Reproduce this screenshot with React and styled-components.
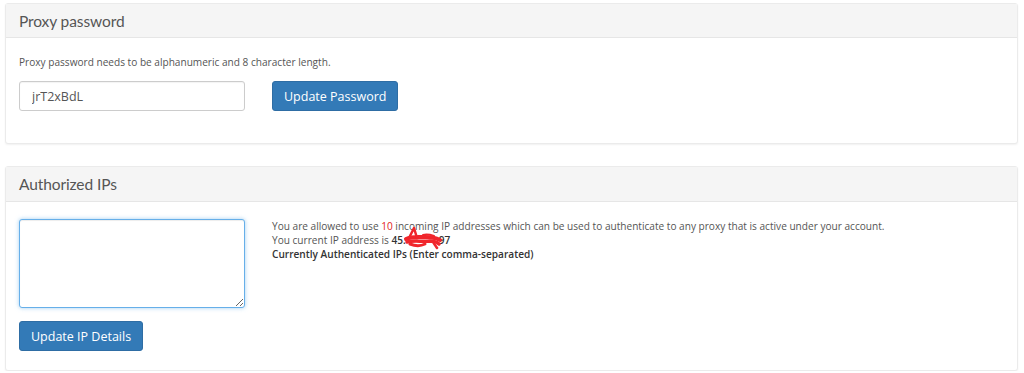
import React from 'react';
import styled, { createGlobalStyle } from 'styled-components';

const Global = createGlobalStyle`
  body {
    margin: 0;
    background: #fff;
    font-family: "Open Sans", "Liberation Sans", sans-serif;
    color: #555;
  }
`;

const Page = styled.div`
  padding: 3px 6px 0 5px;
  display: flex;
  flex-direction: column;
  gap: 22px;
`;

const Panel = styled.section`
  background: #fff;
  border: 1px solid #ebebeb;
  border-radius: 3px;
  box-shadow: 0 1px 2px rgba(0, 0, 0, 0.06);
`;

const PanelHeading = styled.div`
  background: #f5f5f5;
  border-bottom: 1px solid #e6e6e6;
  height: ${(p) => p.h}px;
  box-sizing: border-box;
  padding-left: 13px;
  display: flex;
  align-items: center;
  font-family: "Lato", "Open Sans", sans-serif;
  font-size: 15.5px;
  letter-spacing: -0.1px;
  color: #555;
`;

const PanelBody = styled.div`
  padding: ${(p) => p.pad};
`;

const Hint = styled.p`
  margin: 0 0 12px;
  font-size: 10.1px;
  line-height: 14px;
  color: #555;
`;

const Row = styled.div`
  display: flex;
  align-items: flex-start;
  gap: 27px;
`;

const TextInput = styled.input`
  width: 226px;
  height: 30px;
  box-sizing: border-box;
  border: 1px solid #ccc;
  border-radius: 3px;
  padding: 0 12px;
  font-family: "Open Sans", sans-serif;
  font-size: 12.5px;
  color: #555;
  box-shadow: inset 0 1px 1px rgba(0, 0, 0, 0.05);
  outline: none;
`;

const Button = styled.button`
  height: 30px;
  padding: 0 11px;
  background: #337ab7;
  border: 1px solid #2e6da4;
  border-radius: 3px;
  color: #fff;
  font-family: "Open Sans", sans-serif;
  font-size: 12.5px;
  cursor: pointer;
`;

const Column = styled.div`
  display: flex;
  flex-direction: column;
  align-items: flex-start;
  gap: 13px;
`;

const TextArea = styled.textarea`
  width: 226px;
  height: 89px;
  box-sizing: border-box;
  border: 1px solid #66afe9;
  border-radius: 3px;
  box-shadow: inset 0 1px 1px rgba(0, 0, 0, 0.075), 0 0 4px rgba(102, 175, 233, 0.6);
  outline: none;
  resize: vertical;
  font-family: "Open Sans", sans-serif;
`;

const Info = styled.div`
  font-size: 10.1px;
  line-height: 14px;
  color: #555;
`;

const Count = styled.span`
  color: #e2231a;
`;

const Strong = styled.b`
  color: #333;
  font-weight: 600;
`;

const Hidden = styled.span`
  position: relative;
  display: inline-block;
  width: 33px;
  height: 10px;
`;

const Scribble = styled.svg`
  position: absolute;
  left: -3px;
  top: -9px;
  overflow: visible;
`;

export default function App() {
  return (
    <>
      <Global />
      <Page>
        <Panel>
          <PanelHeading h={34}>Proxy password</PanelHeading>
          <PanelBody pad="17px 13px 32px">
            <Hint>Proxy password needs to be alphanumeric and 8 character length.</Hint>
            <Row>
              <TextInput defaultValue="jrT2xBdL" />
              <Button>Update Password</Button>
            </Row>
          </PanelBody>
        </Panel>
        <Panel>
          <PanelHeading h={35}>Authorized IPs</PanelHeading>
          <PanelBody pad="17px 13px 19px">
            <Row>
              <Column>
                <TextArea />
                <Button>Update IP Details</Button>
              </Column>
              <Info>
                You are allowed to use <Count>10</Count> incoming IP addresses which can be used to
                authenticate to any proxy that is active under your account.
                <br />
                You current IP address is <Strong>45.<Hidden>
                  <Scribble width="40" height="24" viewBox="0 0 40 24">
                    <g stroke="#f0262c" fill="none" strokeLinecap="round" strokeLinejoin="round">
                      <path d="M3 14 C9 11 16 12 22 12 C28 12 33 13 37 15" strokeWidth="4" />
                      <path d="M4 17 C11 15 19 17 27 16 C31 16 34 17 36 19" strokeWidth="3.5" />
                      <path d="M6 13 L11 3 L14 13" strokeWidth="2.5" />
                      <path d="M7 19 C12 21 18 21 22 19" strokeWidth="3" />
                      <path d="M30 17 L34 23" strokeWidth="2.5" />
                      <path d="M20 10 C24 9 28 10 31 11" strokeWidth="2" />
                    </g>
                  </Scribble>
                </Hidden>97</Strong>
                <br />
                <Strong>Currently Authenticated IPs (Enter comma-separated)</Strong>
              </Info>
            </Row>
          </PanelBody>
        </Panel>
      </Page>
    </>
  );
}
